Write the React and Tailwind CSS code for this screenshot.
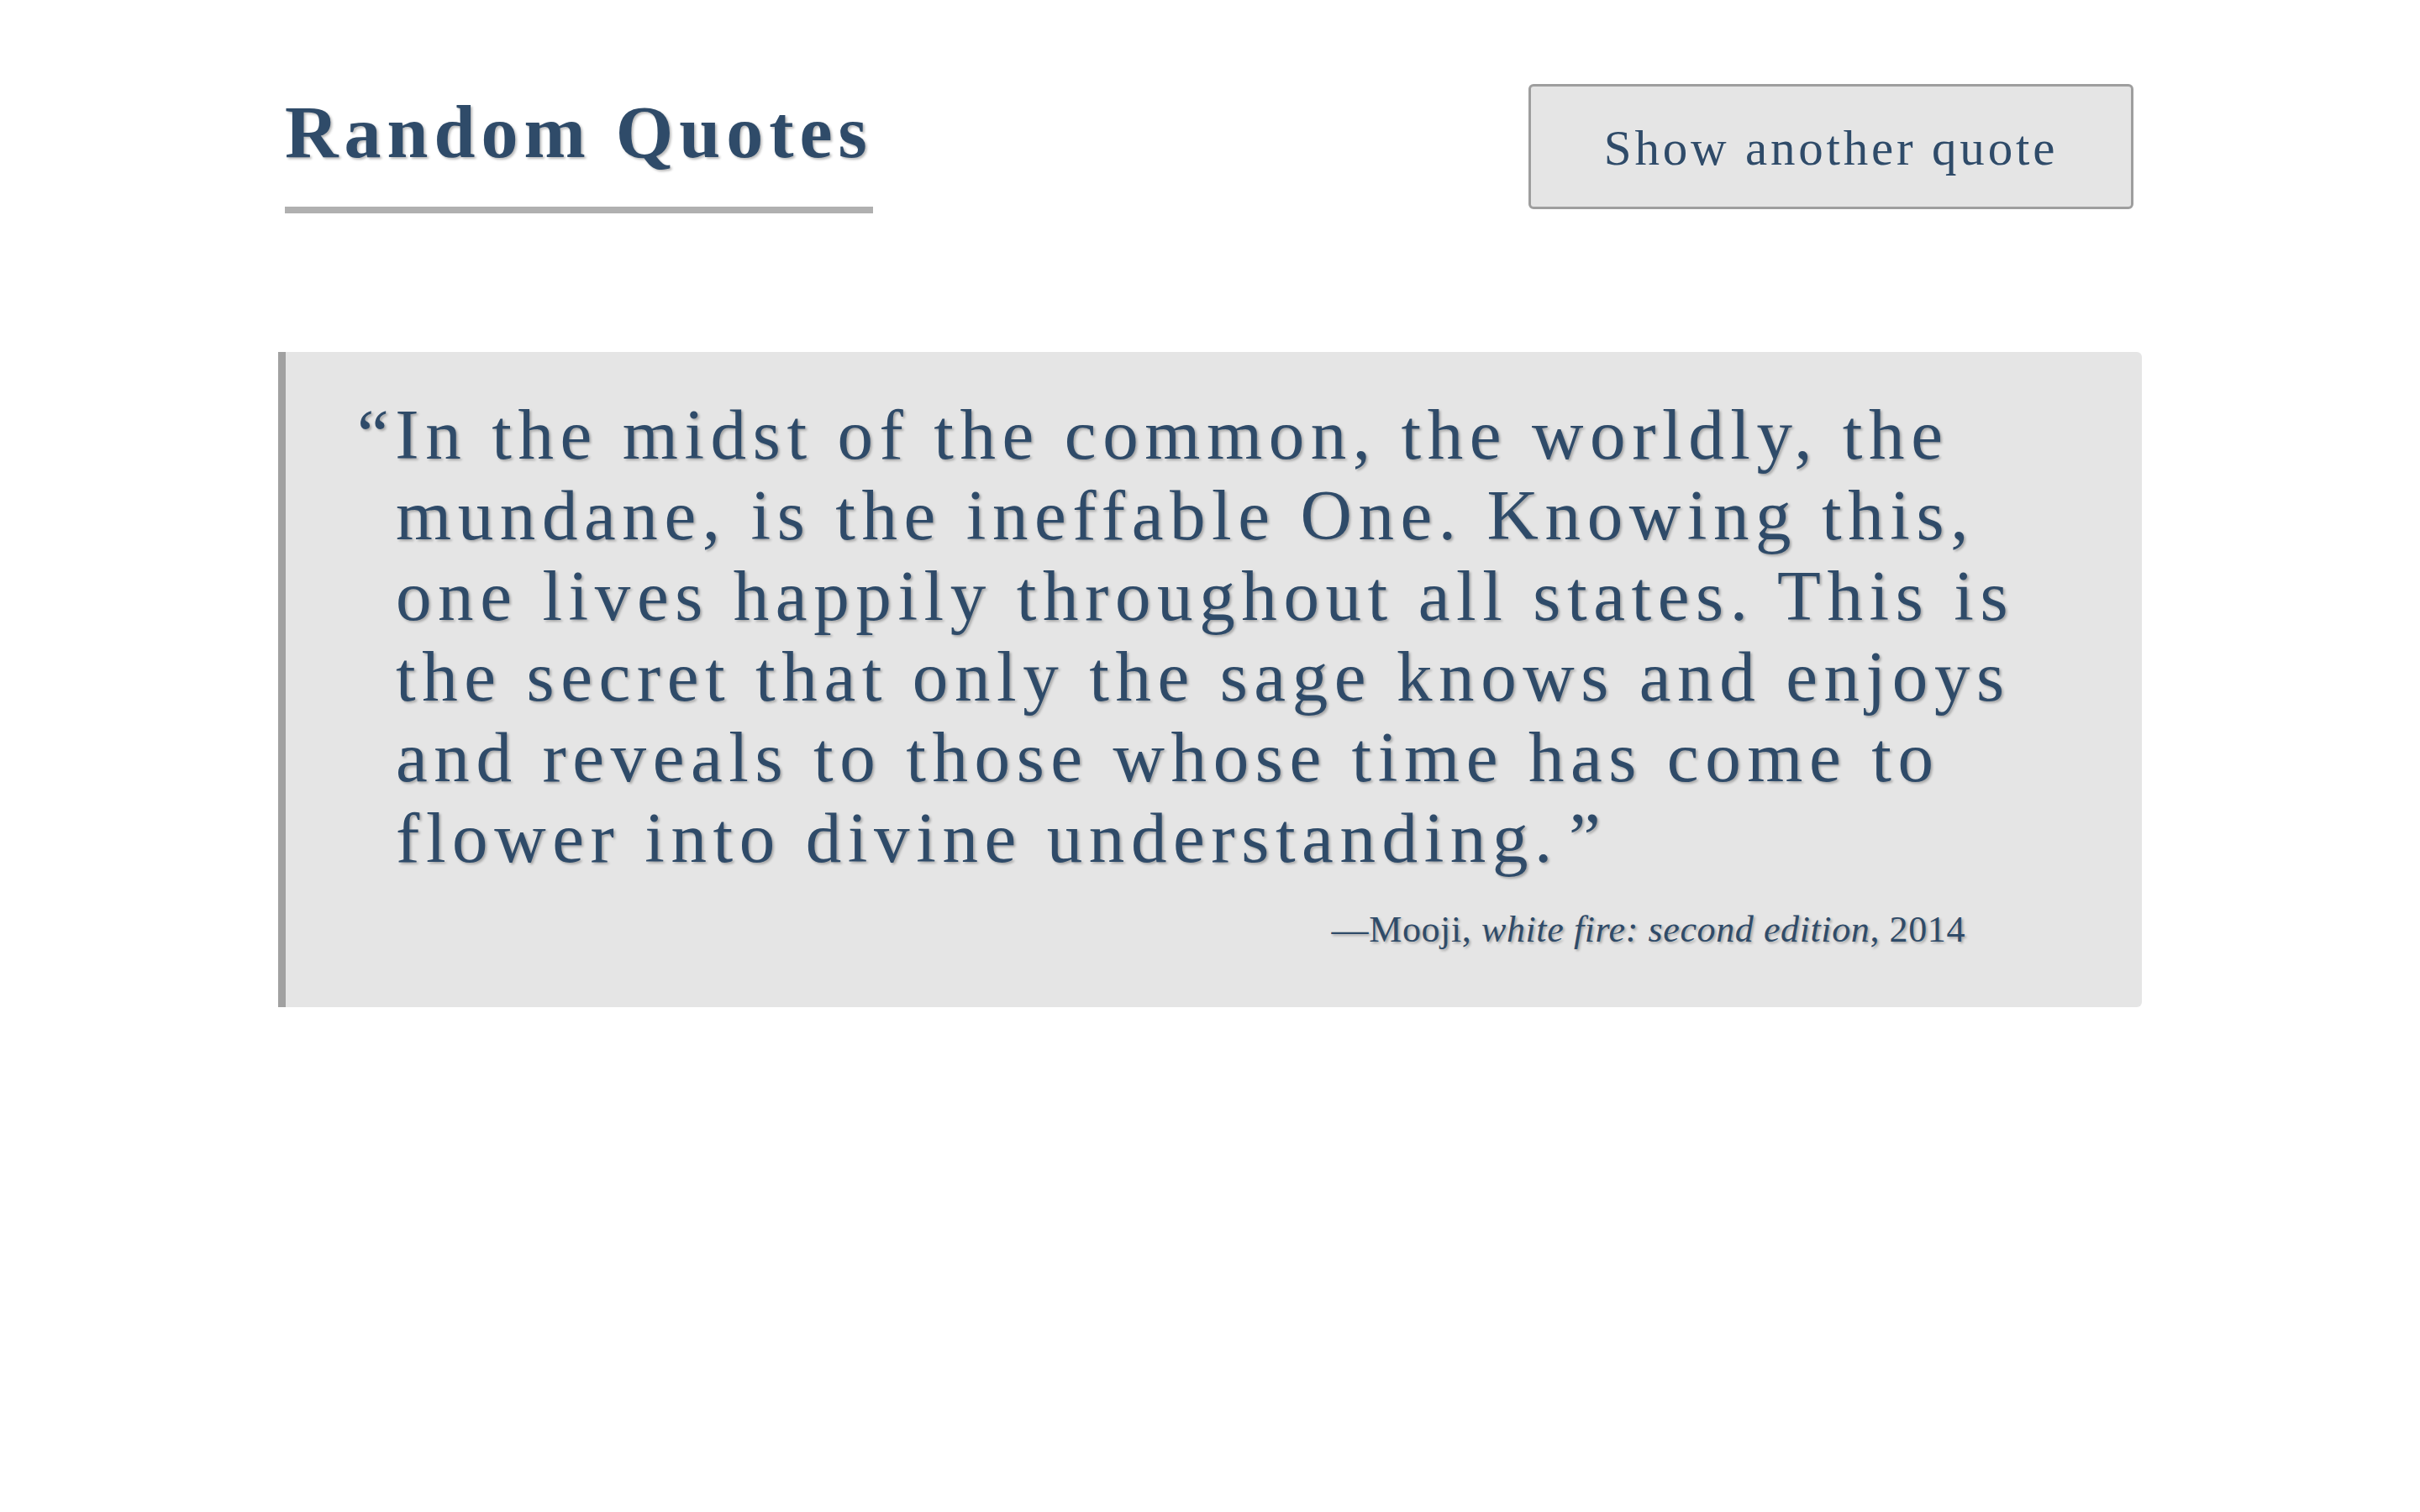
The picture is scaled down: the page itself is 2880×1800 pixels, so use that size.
import { useState } from "react";

const quote = {
  lines: [
    "In the midst of the common, the worldly, the",
    "mundane, is the ineffable One. Knowing this,",
    "one lives happily throughout all states. This is",
    "the secret that only the sage knows and enjoys",
    "and reveals to those whose time has come to",
    "flower into divine understanding.",
  ],
  author: "Mooji",
  source: "white fire: second edition",
  year: "2014",
};

export default function App() {
  const [count, setCount] = useState(0);

  return (
    <div className="min-h-screen bg-white text-[#2f4b69] font-['Liberation_Serif',_'Times_New_Roman',_serif] [text-shadow:2px_2px_3px_rgba(0,0,0,0.28)]">
      <div className="w-[2218px] mx-auto">
        <header className="flex justify-between items-start pt-[100px] pl-[8px] pr-[10px]">
          <h1 className="mt-[8px] inline-block border-b-[8px] border-[#b0b0b0] pb-[38px] text-[88px] leading-[100px] font-bold tracking-[7px]">
            Random Quotes
          </h1>
          <button
            onClick={() => setCount(count + 1)}
            className="w-[720px] h-[149px] border-[3px] border-[#9e9e9e] rounded-[6px] bg-[#e5e5e5] text-[59px] tracking-[3.8px] pt-[4px] cursor-pointer"
          >
            Show another quote
          </button>
        </header>

        <blockquote className="mt-[165px] bg-[#e5e5e5] border-l-[9px] border-[#a1a1a1] rounded-r-[6px] pt-[50px] pb-[66px] pl-[131px] pr-[60px]">
          <p className="text-[85px] leading-[96px] tracking-[7.6px] whitespace-nowrap [text-indent:-46px]">
            <span>“</span>
            {quote.lines.map((line, i) => (
              <span key={i}>
                {line}
                {i < quote.lines.length - 1 ? <br /> : <span className="ml-[12px]">”</span>}
              </span>
            ))}
          </p>
          <p className="mt-[36px] text-[44px] leading-[52px] text-right pr-[150px] tracking-[0.6px]">
            —{quote.author}, <i>{quote.source}</i>, {quote.year}
          </p>
        </blockquote>
      </div>
    </div>
  );
}
